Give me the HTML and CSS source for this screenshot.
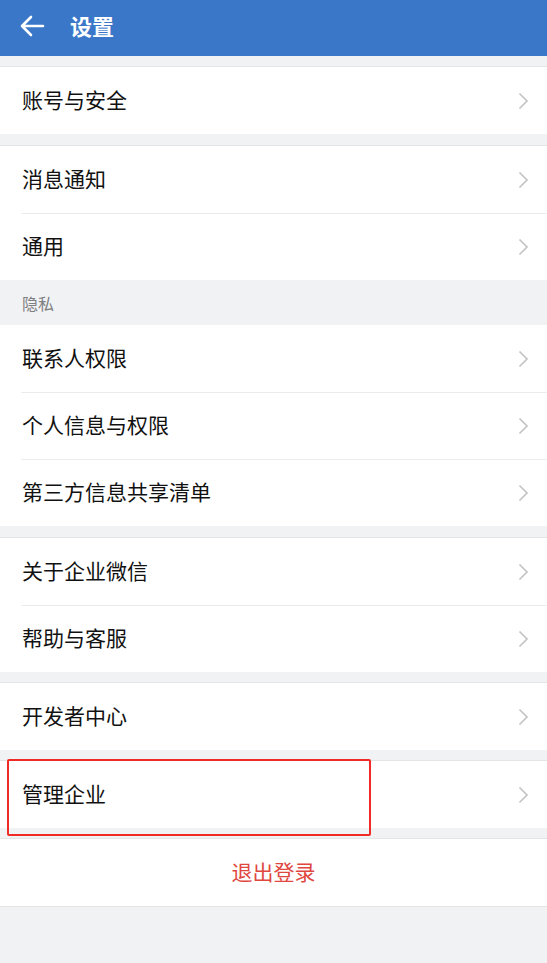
FILE: index.html
```html
<!DOCTYPE html>
<html lang="zh">
<head>
<meta charset="utf-8">
<link rel="stylesheet" href="styles.css">
</head>
<body>
<div class="page">
  <header class="topbar">
    <svg class="back" width="26" height="22" viewBox="0 0 26 22"><path d="M24 11H3M12 2L3 11l9 9" fill="none" stroke="#fff" stroke-width="2.6" stroke-linecap="round" stroke-linejoin="round"/></svg>
    <span class="title">设置</span>
  </header>

  <div class="gap"></div>
  <div class="group">
    <div class="row"><span>账号与安全</span><svg class="chev" viewBox="0 0 11 18"><path d="M1.5 1.5L9 9l-7.5 7.5"/></svg></div>
  </div>

  <div class="gap wide"></div>
  <div class="group">
    <div class="row"><span>消息通知</span><svg class="chev" viewBox="0 0 11 18"><path d="M1.5 1.5L9 9l-7.5 7.5"/></svg></div>
    <div class="row"><span>通用</span><svg class="chev" viewBox="0 0 11 18"><path d="M1.5 1.5L9 9l-7.5 7.5"/></svg></div>
  </div>

  <div class="label">隐私</div>
  <div class="group">
    <div class="row"><span>联系人权限</span><svg class="chev" viewBox="0 0 11 18"><path d="M1.5 1.5L9 9l-7.5 7.5"/></svg></div>
    <div class="row"><span>个人信息与权限</span><svg class="chev" viewBox="0 0 11 18"><path d="M1.5 1.5L9 9l-7.5 7.5"/></svg></div>
    <div class="row"><span>第三方信息共享清单</span><svg class="chev" viewBox="0 0 11 18"><path d="M1.5 1.5L9 9l-7.5 7.5"/></svg></div>
  </div>

  <div class="gap wide"></div>
  <div class="group">
    <div class="row"><span>关于企业微信</span><svg class="chev" viewBox="0 0 11 18"><path d="M1.5 1.5L9 9l-7.5 7.5"/></svg></div>
    <div class="row"><span>帮助与客服</span><svg class="chev" viewBox="0 0 11 18"><path d="M1.5 1.5L9 9l-7.5 7.5"/></svg></div>
  </div>

  <div class="gap"></div>
  <div class="group">
    <div class="row"><span>开发者中心</span><svg class="chev" viewBox="0 0 11 18"><path d="M1.5 1.5L9 9l-7.5 7.5"/></svg></div>
  </div>

  <div class="gap"></div>
  <div class="group">
    <div class="row"><span>管理企业</span><svg class="chev" viewBox="0 0 11 18"><path d="M1.5 1.5L9 9l-7.5 7.5"/></svg></div>
    <div class="highlight"></div>
  </div>

  <div class="gap"></div>
  <div class="group">
    <div class="logout">退出登录</div>
  </div>
</div>
</body>
</html>
```

FILE: styles.css
```css
* { box-sizing: border-box; }
html, body { margin: 0; padding: 0; }
body {
  background: #f1f2f4;
  font-family: "Noto Sans CJK SC", "Noto Sans", sans-serif;
  width: 547px;
  height: 963px;
  overflow: hidden;
}
.page { display: flex; flex-direction: column; }
.topbar {
  height: 56px;
  background: #3a77c8;
  display: flex;
  align-items: center;
  padding-left: 19px;
  gap: 25px;
}
.back { display: block; margin-top: -4px; }
.title {
  color: #fff;
  font-size: 22px;
  font-weight: 700;
  margin-top: -6px;
}
.gap { height: 11px; border-bottom: 1px solid #e4e5e7; }
.gap.wide { height: 12px; }
.group { background: #fff; position: relative; }
.row {
  height: 67px;
  display: flex;
  align-items: center;
  justify-content: space-between;
  padding: 0 18px 3px 22px;
  font-size: 21px;
  line-height: 1;
  color: #111;
  position: relative;
}
.row + .row::before {
  content: "";
  position: absolute;
  left: 21px;
  right: 0;
  top: 0;
  height: 1px;
  background: #ececec;
}
.chev {
  width: 11px;
  height: 18px;
  margin-top: 3px;
  fill: none;
  stroke: #c4c4c4;
  stroke-width: 1.7;
}
.label {
  height: 45px;
  display: flex;
  align-items: center;
  padding-left: 22px;
  font-size: 16px;
  color: #7e7f82;
}
.highlight {
  position: absolute;
  left: 7px;
  top: -2px;
  width: 364px;
  height: 77px;
  border: 2px solid #f02b25;
  border-radius: 2px;
  pointer-events: none;
}
.logout {
  height: 68px;
  display: flex;
  align-items: center;
  justify-content: center;
  padding-bottom: 3px;
  font-size: 21px;
  line-height: 1;
  color: #e0473f;
  border-bottom: 1px solid #e4e5e7;
}
```
